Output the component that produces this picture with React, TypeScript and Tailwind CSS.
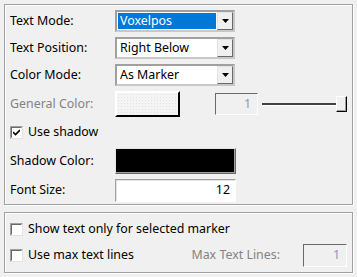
import React from "react";

const font = "font-['Segoe_UI','Noto_Sans','Open_Sans',sans-serif] text-[12.4px]";

function Combo({ value, selected }: { value: string; selected?: boolean }) {
  return (
    <div className="flex h-[22px] w-[120px] border-2 border-t-[#a0a0a0] border-l-[#a0a0a0] border-b-[#c8c8c8] border-r-[#c8c8c8] bg-white">
      <div className="flex flex-1 items-center p-px">
        <div
          className={`flex h-full flex-1 items-center pl-[2px] ${
            selected ? "bg-[#0078d7] text-white" : "text-black"
          }`}
        >
          {value}
        </div>
      </div>
      <div className="flex w-[16px] items-center justify-center border border-t-[#e3e3e3] border-l-[#e3e3e3] border-b-[#696969] border-r-[#696969] bg-[#f0f0f0]">
        <svg width="7" height="4" viewBox="0 0 7 4">
          <path d="M0 0h7L3.5 4z" fill="#000" />
        </svg>
      </div>
    </div>
  );
}

function Check({ checked }: { checked?: boolean }) {
  return (
    <div className="flex h-[13px] w-[13px] items-center justify-center border border-t-[#a0a0a0] border-l-[#a0a0a0] border-b-[#e3e3e3] border-r-[#e3e3e3]">
      <div className="flex h-full w-full items-center justify-center border border-t-[#696969] border-l-[#696969] border-b-white border-r-white bg-white">
        {checked && (
          <svg width="7" height="7" viewBox="0 0 7 7">
            <path d="M0 3l2.5 2.5L7 1" stroke="#000" strokeWidth="1.6" fill="none" />
          </svg>
        )}
      </div>
    </div>
  );
}

function Row({ label, h, children, dim }: { label: string; h: string; children: React.ReactNode; dim?: boolean }) {
  return (
    <div className={`flex items-center ${h}`}>
      <div className={`w-[105px] ${dim ? "text-[#838383]" : "text-black"}`}>{label}</div>
      {children}
    </div>
  );
}

export default function App() {
  return (
    <div className={`h-[277px] w-[357px] bg-[#f0f0f0] p-[4px] ${font}`}>
      <div className="flex h-[201px] flex-col gap-[5px] border border-[#a0a0a0] px-[5px] pt-[5px] pb-[2px] shadow-[inset_1px_1px_0_white,1px_1px_0_white]">
        <Row label="Text Mode:" h="h-[22px]">
          <Combo value="Voxelpos" selected />
        </Row>
        <Row label="Text Position:" h="h-[22px]">
          <Combo value="Right Below" />
        </Row>
        <Row label="Color Mode:" h="h-[22px]">
          <Combo value="As Marker" />
        </Row>
        <Row label="General Color:" h="h-[26px]" dim>
          <div className="h-[26px] w-[65px] border-2 border-t-white border-l-white border-b-black border-r-black bg-[#f4f4f4] bg-[radial-gradient(#e2e2e2_0.6px,transparent_0.7px)] bg-[length:3px_3px]" />
          <div className="ml-[35px] flex h-[22px] w-[43px] items-center justify-end border border-t-[#696969] border-l-[#696969] border-b-white border-r-white pr-[6px] text-[#8a9ab0]">
            1
          </div>
          <div className="flex flex-1 items-center pl-[4px]">
            <div className="h-[3px] flex-1 border-t-2 border-t-[#404040] border-b border-b-white" />
            <div className="h-[16px] w-[11px] border border-t-white border-l-white border-b-black border-r-black bg-[#f0f0f0] shadow-[inset_-1px_-1px_0_#a0a0a0]" />
          </div>
        </Row>
        <div className="flex h-[21px] items-center gap-[5px]">
          <Check checked />
          <span>Use shadow</span>
        </div>
        <Row label="Shadow Color:" h="h-[26px]">
          <div className="h-[26px] w-[121px] border border-t-[#e3e3e3] border-l-[#e3e3e3] border-b-[#696969] border-r-[#696969] bg-black shadow-[inset_-1px_-1px_0_#a0a0a0]" />
        </Row>
        <Row label="Font Size:" h="h-[23px]">
          <div className="flex h-[23px] w-[121px] items-center justify-end border border-t-[#a0a0a0] border-l-[#a0a0a0] border-b-white border-r-white bg-white pr-[5px] shadow-[inset_1px_1px_0_#e3e3e3]">
            12
          </div>
        </Row>
      </div>
      <div className="mt-[7px] flex h-[61px] flex-col gap-[4px] border border-[#a0a0a0] px-[5px] py-[5px] shadow-[inset_1px_1px_0_white,1px_1px_0_white]">
        <div className="flex h-[22px] items-center gap-[5px]">
          <Check />
          <span>Show text only for selected marker</span>
        </div>
        <div className="flex h-[23px] items-center gap-[5px]">
          <Check />
          <span>Use max text lines</span>
          <span className="ml-auto text-[#838383]">Max Text Lines:</span>
          <div className="ml-[18px] flex h-[23px] w-[44px] items-center justify-end border border-t-[#696969] border-l-[#696969] border-b-white border-r-white pr-[6px] text-[#8a9ab0]">
            1
          </div>
        </div>
      </div>
    </div>
  );
}
